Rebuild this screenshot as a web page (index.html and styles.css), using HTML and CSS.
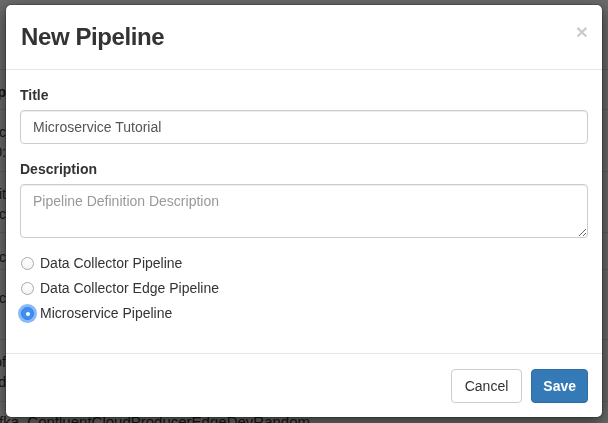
FILE: index.html
```html
<!DOCTYPE html>
<html>
<head>
<meta charset="utf-8">
<link rel="stylesheet" href="styles.css">
</head>
<body>
<div class="page">
  <div class="bg-row r1"></div>
  <div class="bg-row r2"><div class="frag bold">Group</div></div>
  <div class="bg-row r3"><div class="frag">abc</div><div class="frag">10:</div></div>
  <div class="bg-row r4"><div class="frag">Edit</div><div class="frag">abc</div></div>
  <div class="bg-row r5"><div class="frag">abc</div></div>
  <div class="bg-row r6"><div class="frag">abc</div></div>
  <div class="bg-row r7"><div class="frag">of</div><div class="frag">and</div></div>
  <div class="bg-row r8"><span class="bottom-text">fka_ConfluentCloudProducerEdgeDevRandom</span></div>
</div>

<div class="modal">
  <div class="modal-header">
    <h4 class="modal-title">New Pipeline</h4>
    <span class="close">×</span>
  </div>
  <div class="modal-body">
    <div class="form-group">
      <label class="control-label">Title</label>
      <input class="form-control" type="text" value="Microservice Tutorial">
    </div>
    <div class="form-group">
      <label class="control-label">Description</label>
      <textarea class="form-control textarea" rows="2" placeholder="Pipeline Definition Description"></textarea>
    </div>
    <div class="form-group radios">
      <div class="radio"><span class="radio-ind"></span><span>Data Collector Pipeline</span></div>
      <div class="radio"><span class="radio-ind"></span><span>Data Collector Edge Pipeline</span></div>
      <div class="radio"><span class="radio-ind checked"></span><span>Microservice Pipeline</span></div>
    </div>
  </div>
  <div class="modal-footer">
    <button class="btn btn-default">Cancel</button>
    <button class="btn btn-primary">Save</button>
  </div>
</div>
</body>
</html>
```

FILE: styles.css
```css
* { box-sizing: border-box; }
html, body { margin: 0; padding: 0; }
body {
  font-family: "Liberation Sans", Arial, sans-serif;
  font-size: 14px;
  line-height: 20px;
  color: #333;
  background: #6b6b6b;
  width: 608px;
  height: 423px;
  overflow: hidden;
}
.page { width: 608px; }
.bg-row {
  border-bottom: 1px solid #5f5f5f;
  display: flex;
  flex-direction: column;
  color: #141414;
}
.r1 { height: 70px; }
.r2 { height: 40px; padding-top: 12px; }
.r3 { height: 62px; padding-top: 12px; }
.r4 { height: 61px; padding-top: 12px; }
.r5 { height: 37px; padding-top: 14px; }
.r6 { height: 70px; padding-top: 18px; }
.r7 { height: 62px; padding-top: 12px; }
.r8 { height: 30px; padding-top: 10px; border-bottom: none; }
.frag {
  width: 6px;
  overflow: hidden;
  display: flex;
  justify-content: flex-end;
  white-space: nowrap;
}
.bold { font-weight: bold; }
.bottom-text { white-space: nowrap; margin-left: -1px; font-size: 15px; }

.modal {
  position: fixed;
  top: 4px;
  left: 5px;
  width: 598px;
  background: #fff;
  border-radius: 6px;
  box-shadow: 0 5px 15px rgba(0,0,0,.5);
  border: 1px solid rgba(0,0,0,.2);
  background-clip: padding-box;
}
.modal-header {
  display: flex;
  justify-content: space-between;
  align-items: flex-start;
  padding: 15px 15px 15px 15px;
  border-bottom: 1px solid #e5e5e5;
}
.modal-title {
  margin: 0;
  font-size: 24px;
  line-height: 34px;
  font-weight: bold;
  letter-spacing: -0.4px;
  color: #333;
}
.close {
  font-size: 21px;
  font-weight: bold;
  line-height: 1;
  color: #000;
  opacity: .2;
  text-shadow: 0 1px 0 #fff;
  margin-top: 1px;
  margin-right: -1px;
}
.modal-body { padding: 15px 14px 15px 14px; }
.form-group { margin-bottom: 15px; }
.control-label {
  display: block;
  font-weight: bold;
  margin-bottom: 5px;
}
.form-control {
  display: block;
  width: 100%;
  height: 34px;
  padding: 6px 12px;
  font-family: inherit;
  font-size: 14px;
  line-height: 20px;
  color: #555;
  background: #fff;
  border: 1px solid #ccc;
  border-radius: 4px;
  box-shadow: inset 0 1px 1px rgba(0,0,0,.075);
  margin: 0;
}
.textarea { height: 54px; resize: vertical; }
.textarea::placeholder { color: #999; }
.radios { margin-bottom: 15px; }
.radio {
  display: flex;
  align-items: center;
  gap: 6px;
  height: 20px;
  margin-bottom: 5px;
}
.radio:last-child { margin-bottom: 0; }
.radio-ind {
  width: 13px;
  height: 13px;
  border-radius: 50%;
  border: 1px solid #a9a9a9;
  background: linear-gradient(#fff, #f3f3f3);
  margin-left: 1px;
  flex: none;
}
.radio-ind.checked {
  background: #3d8ff4;
  border-color: #2f7fe6;
  box-shadow: 0 0 0 3px rgba(95, 160, 245, .75);
  position: relative;
}
.radio-ind.checked::after {
  content: "";
  position: absolute;
  left: 4px;
  top: 4px;
  width: 4px;
  height: 4px;
  border-radius: 50%;
  background: #fff;
}
.modal-footer {
  display: flex;
  justify-content: flex-end;
  gap: 9px;
  padding: 15px 14px 14px 15px;
  border-top: 1px solid #e5e5e5;
}
.btn {
  font-family: inherit;
  font-size: 14px;
  line-height: 20px;
  padding: 6px 12px;
  border-radius: 4px;
  border: 1px solid transparent;
  height: 34px;
  margin: 0;
}
.btn-default { background: #fff; border-color: #ccc; color: #333; padding: 6px 13px; }
.btn-primary { background: #337ab7; border-color: #2e6da4; color: #fff; font-weight: bold; padding: 6px 11px; }
```
